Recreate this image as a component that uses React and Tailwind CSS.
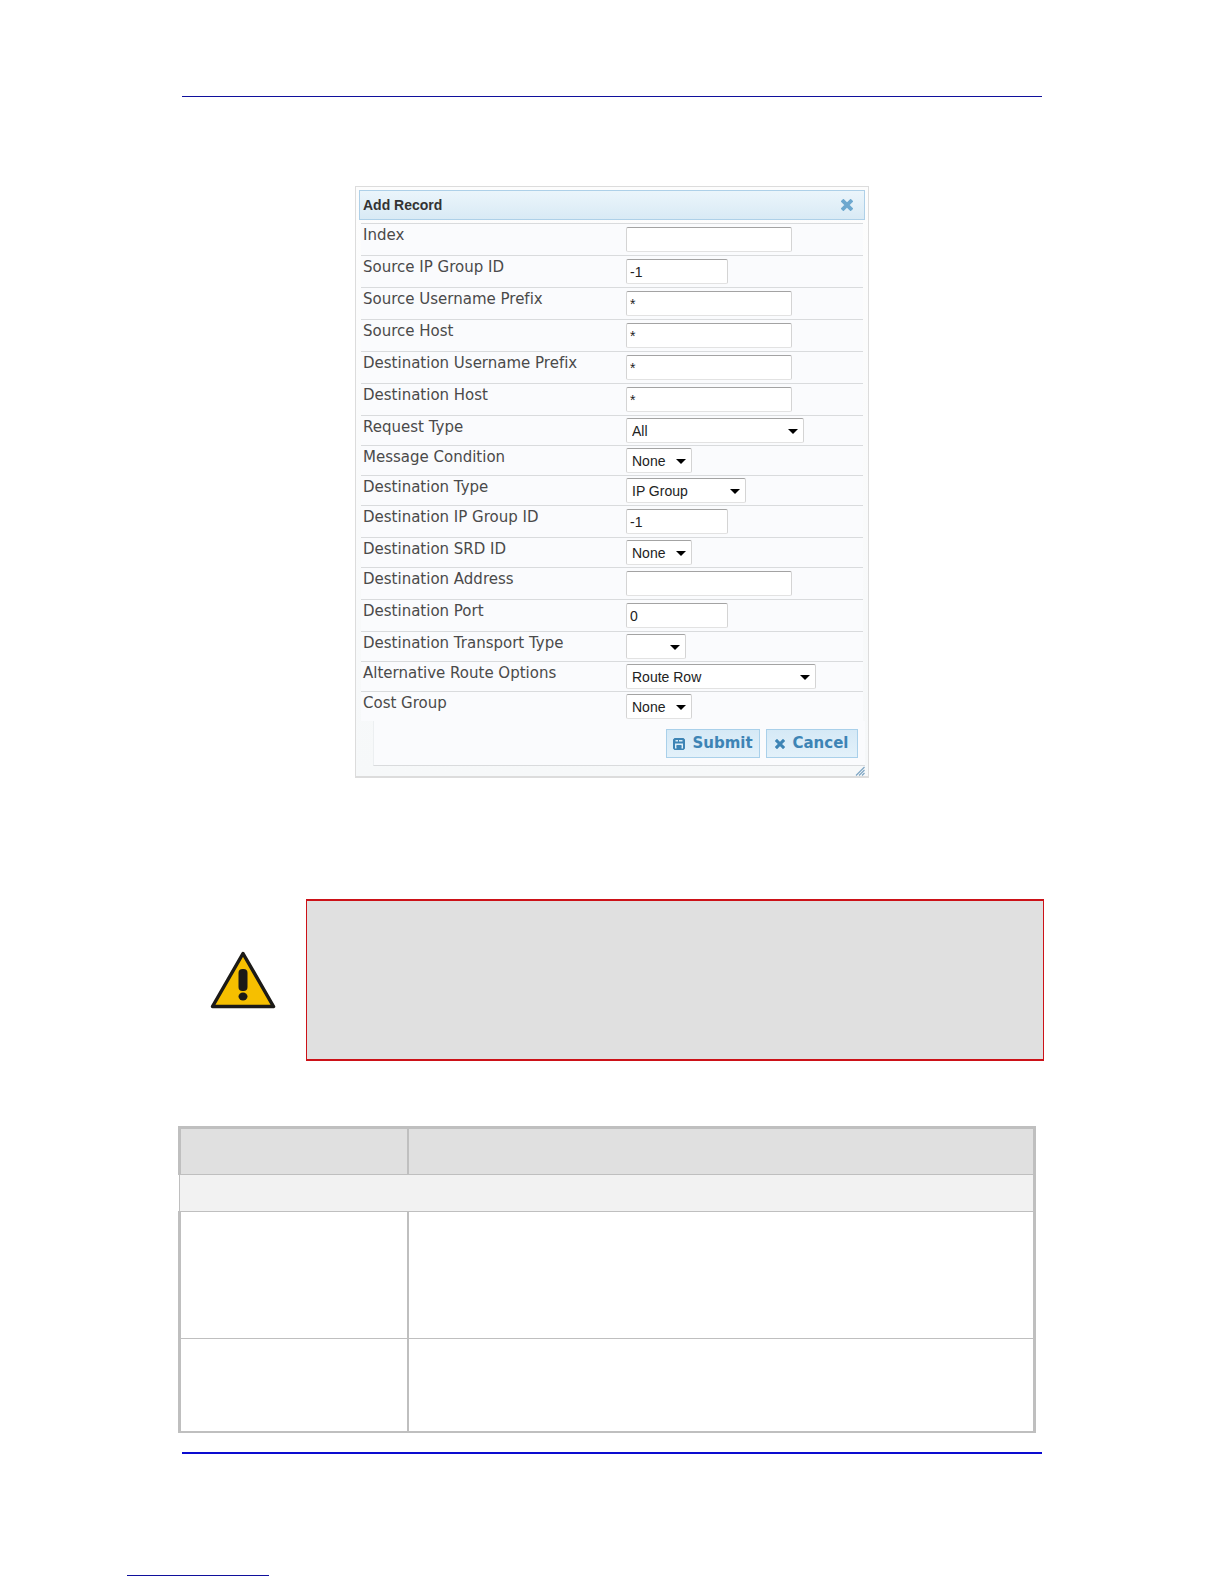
import React from 'react';

const fields = [
    { id: 'index', label: 'Index', type: 'text', width: 'w-[166px]', value: '' },
    { id: 'srcIpGroup', label: 'Source IP Group ID', type: 'text', width: 'w-[102px]', value: '-1' },
    { id: 'srcUser', label: 'Source Username Prefix', type: 'text', width: 'w-[166px]', value: '*' },
    { id: 'srcHost', label: 'Source Host', type: 'text', width: 'w-[166px]', value: '*' },
    { id: 'destUser', label: 'Destination Username Prefix', type: 'text', width: 'w-[166px]', value: '*' },
    { id: 'destHost', label: 'Destination Host', type: 'text', width: 'w-[166px]', value: '*' },
    { id: 'requestType', label: 'Request Type', type: 'select', width: 'w-[178px]', value: 'All' },
    { id: 'condition', label: 'Message Condition', type: 'select', width: 'w-[66px]', value: 'None' },
    { id: 'destType', label: 'Destination Type', type: 'select', width: 'w-[120px]', value: 'IP Group' },
    { id: 'destIpGroup', label: 'Destination IP Group ID', type: 'text', width: 'w-[102px]', value: '-1' },
    { id: 'destSrd', label: 'Destination SRD ID', type: 'select', width: 'w-[66px]', value: 'None' },
    { id: 'destAddress', label: 'Destination Address', type: 'text', width: 'w-[166px]', value: '' },
    { id: 'destPort', label: 'Destination Port', type: 'text', width: 'w-[102px]', value: '0' },
    { id: 'transport', label: 'Destination Transport Type', type: 'select', width: 'w-[60px]', value: '' },
    { id: 'altRoute', label: 'Alternative Route Options', type: 'select', width: 'w-[190px]', value: 'Route Row' },
    { id: 'costGroup', label: 'Cost Group', type: 'select', width: 'w-[66px]', value: 'None' },
];

const controlStyle =
    "block h-[25px] rounded-[2px] border border-t-[#a3a3a3] border-x-[#d4d4d4] border-b-[#e2e2e2] bg-white font-['Liberation_Sans',sans-serif] text-[14px] leading-5 text-[#222] outline-none";

const CloseIcon = ({ className }) => (
    <svg viewBox="0 0 12 12" className={className} aria-hidden="true">
        <path d="M2.4 2.4l7.2 7.2M9.6 2.4L2.4 9.6" stroke="currentColor" strokeWidth="3.8" strokeLinecap="square" />
    </svg>
);

const DiskIcon = () => (
    <svg viewBox="0 0 12 12" className="size-3" aria-hidden="true">
        <path fill="currentColor" fillRule="evenodd" d="M1.5 0h9L12 1.5v9L10.5 12h-9L0 10.5v-9zM2.5 2v1.5h7V2zM2 5.5v5h1.500v-2.500h5v2.500H10v-5z" />
        <path fill="currentColor" d="M5 1h1v3H5zM3.500 7h5v1.500h-5zM6.500 8h1.500v3H6.500z" />
    </svg>
);

const Field = ({ id, label, type, width, value }) => (
    <div className={`flex items-start border-t border-[#d9dbdd] ${type === 'text' ? 'py-[3px]' : 'py-[2px]'}`}>
        <label htmlFor={id} className={`w-[265px] pl-[2px] text-[15px] leading-4 text-[#4a4a4a] ${type === 'text' ? '' : 'pt-px'}`}>
            {label}
        </label>
        {type === 'text' ? (
            <input id={id} type="text" defaultValue={value} className={`${controlStyle} ${width} px-[3px]`} />
        ) : (
            <div className="relative">
                <select id={id} defaultValue={value} className={`${controlStyle} ${width} appearance-none pl-[5px]`}>
                    <option value={value}>{value}</option>
                </select>
                <svg viewBox="0 0 10 5" className="pointer-events-none absolute top-[11px] right-[6px] h-[5px] w-[10px]" aria-hidden="true">
                    <path d="M0 0h10L5 5z" fill="#000" />
                </svg>
            </div>
        )}
    </div>
);

const buttonStyle =
    'flex h-[29px] items-center justify-center gap-[7px] border border-[#a9d0ea] bg-linear-to-b from-[#d5e9f6] to-[#e3f1fa] text-[15px] font-bold text-[#3d84b5]';

const AddRecordDialog = () => (
    <form
        role="dialog"
        aria-labelledby="dialog-title"
        onSubmit={(e) => e.preventDefault()}
        className="mx-auto w-[514px] border border-b-2 border-[#dcdcdc] bg-linear-to-b from-[#fdfdfd] to-[#f6f8f9] px-[3px] pt-[3px] font-['DejaVu_Sans',sans-serif] [font-variant-ligatures:none]"
    >
        {/* title bar */}
        <div className="flex h-[30px] items-center justify-between border border-[#aed0e8] bg-linear-to-b from-[#ebf5fb] to-[#d9eaf5] pr-[11px] pl-[3px]">
            <h1 id="dialog-title" className="font-['Liberation_Sans',sans-serif] text-[14px] font-bold text-[#333]">
                Add Record
            </h1>
            <button type="button" aria-label="Close" className="text-[#6da8cf]">
                <CloseIcon className="size-3" />
            </button>
        </div>

        {/* fields */}
        <div className="mx-[2px] mt-[3px] bg-[#fafbfd]">
            {fields.map((field) => (
                <Field key={field.id} {...field} />
            ))}
        </div>

        {/* actions */}
        <div className="ml-[14px] flex justify-end gap-[6px] border-b border-l border-b-[#d9dbdd] border-l-[#eceff1] bg-[#fafbfd] pt-2 pr-[7px] pb-[7px]">
            <button type="submit" className={`${buttonStyle} w-[94px]`}>
                <DiskIcon />
                Submit
            </button>
            <button type="button" className={`${buttonStyle} w-[92px]`}>
                <CloseIcon className="size-[10px]" />
                Cancel
            </button>
        </div>

        {/* resize grip */}
        <div className="flex h-[10px] justify-end">
            <svg viewBox="0 0 10 10" className="size-[10px]" aria-hidden="true">
                <path d="M1 9.500L9.500 1M4 9.500L9.500 4M7 9.500L9.500 7" stroke="#7fa6c4" strokeWidth="1.200" />
            </svg>
        </div>
    </form>
);

const WarningNote = () => (
    <section className="mt-[121px] -mr-[2px] flex">
        <div className="flex w-[124px] shrink-0 items-center pl-7">
            <svg viewBox="0 0 66 58" className="h-[58px] w-[66px]" role="img" aria-label="Warning">
                <path d="M33 2.500L63.500 55.500H2.500z" fill="#f6bf00" stroke="#1c1a17" strokeWidth="3.500" strokeLinejoin="round" />
                <rect x="28.500" y="18" width="9" height="22" rx="4" fill="#1c1a17" />
                <ellipse cx="33" cy="45.500" rx="4.500" ry="4" fill="#1c1a17" />
            </svg>
        </div>
        <div className="h-[162px] flex-1 border-x border-y-2 border-[#cc1218] bg-[#e0e0e0]" />
    </section>
);

const ParameterTable = () => (
    <div className="mt-[65px] -ml-1 mr-[6px]">
        <table className="w-full table-fixed border-separate border-spacing-0 border-[#bfbfbf]">
            <colgroup>
                <col className="w-[229px]" />
                <col />
            </colgroup>
            <thead>
                <tr className="h-[49px] bg-[#e0e0e0]">
                    <th className="border-t-3 border-b border-l-3 border-[#bfbfbf] p-0" />
                    <th className="border-t-3 border-r-3 border-b border-l-2 border-[#bfbfbf] p-0" />
                </tr>
            </thead>
            <tbody>
                <tr className="h-[37px]">
                    <td colSpan={2} className="border-r-3 border-b border-[#bfbfbf] p-0">
                        <div className="ml-px h-9 border-l border-[#bfbfbf] bg-[#f2f2f2]" />
                    </td>
                </tr>
                <tr className="h-[127px]">
                    <td className="border-b border-l-3 border-[#bfbfbf] p-0" />
                    <td className="border-r-3 border-b border-l-2 border-[#bfbfbf] p-0" />
                </tr>
                <tr className="h-[94px]">
                    <td className="border-b-2 border-l-3 border-[#bfbfbf] p-0" />
                    <td className="border-r-3 border-b-2 border-l-2 border-[#bfbfbf] p-0" />
                </tr>
            </tbody>
        </table>
    </div>
);

const App = () => {
    return (
        <div className="bg-white pt-24 pb-2">
            <main className="px-[182px]">
                <hr className="mb-[89px] border-t border-[#10109c]" />
                <AddRecordDialog />
                <WarningNote />
                <ParameterTable />
                <hr className="mt-[19px] border-t-2 border-[#0c0cd0]" />
            </main>
            <footer className="mt-[121px] pl-[127px]">
                <hr className="w-[142px] border-t border-[#10109c]" />
            </footer>
        </div>
    );
};

export default App;
